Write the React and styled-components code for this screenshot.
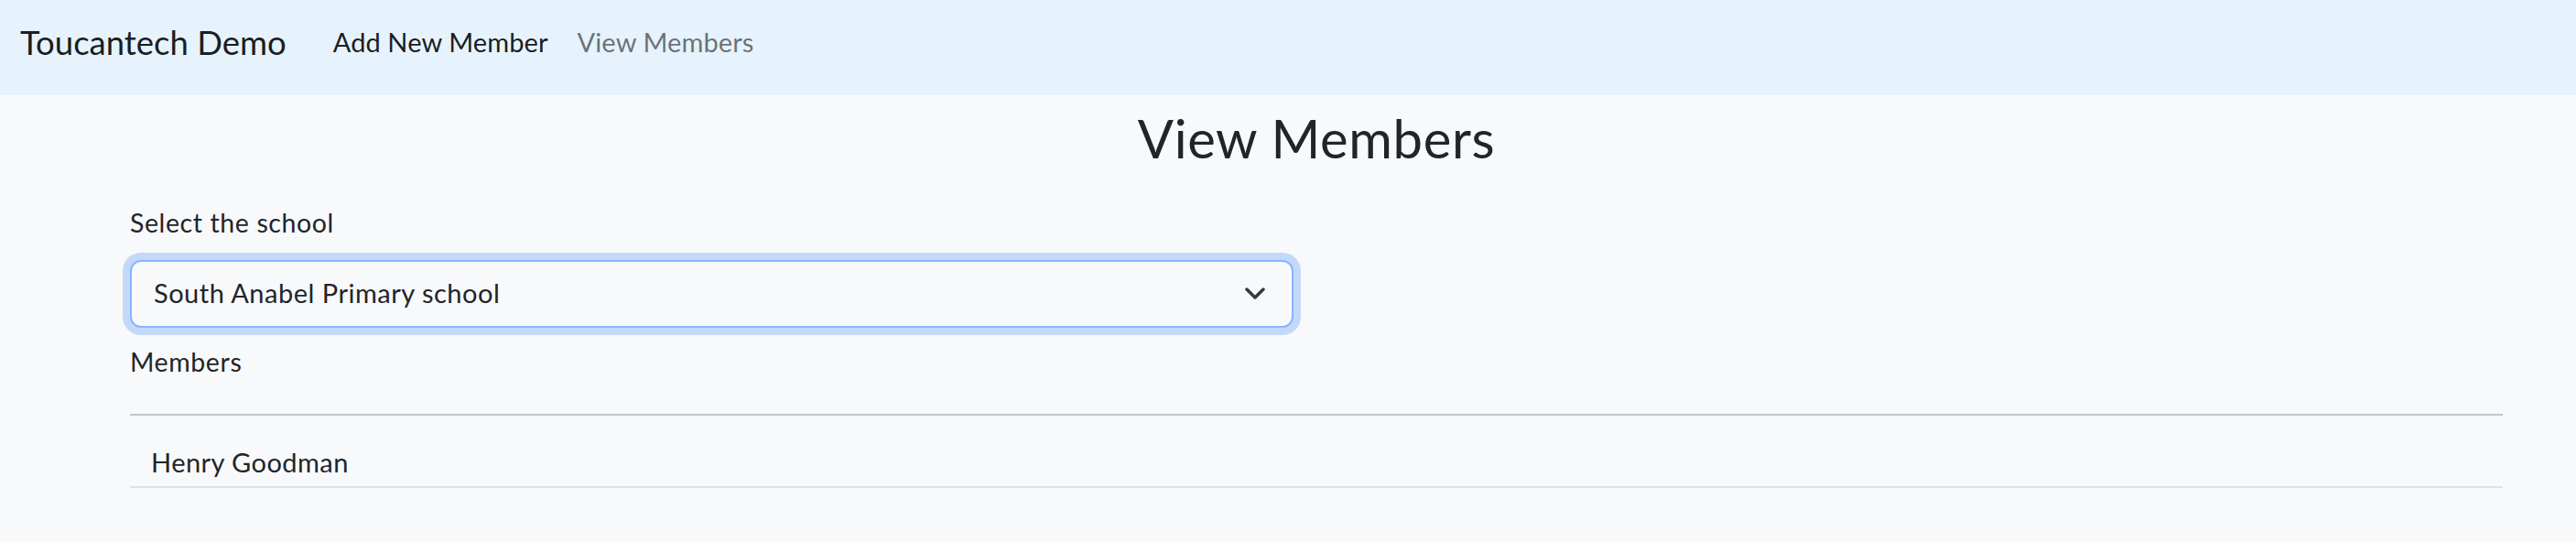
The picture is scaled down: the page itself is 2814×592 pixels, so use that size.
import React from "react";
import styled, { createGlobalStyle } from "styled-components";

const GlobalStyle = createGlobalStyle`
  html, body {
    margin: 0;
    padding: 0;
    background-color: #f8f9fb;
    font-family: Lato, "Noto Sans", sans-serif;
    color: #212529;
  }
`;

const App = () => {
  return (
    <>
      <GlobalStyle />
      <Navbar>
        <Brand>Toucantech Demo</Brand>
        <NavLinks>
          <NavItem>Add New Member</NavItem>
          <NavItem muted>View Members</NavItem>
        </NavLinks>
      </Navbar>
      <Main>
        <Title>View Members</Title>
        <Label>Select the school</Label>
        <SelectBox role="combobox" aria-expanded="false">
          <span>South Anabel Primary school</span>
          <Chevron viewBox="0 0 22 13" aria-hidden="true">
            <path d="M2 2l9 9 9-9" />
          </Chevron>
        </SelectBox>
        <Label spaced>Members</Label>
        <Divider />
        <MemberList>
          <MemberRow>Henry Goodman</MemberRow>
        </MemberList>
      </Main>
    </>
  );
};

export default App;

const Navbar = styled.nav`
  height: 104px;
  box-sizing: border-box;
  padding: 0 22px 11px;
  display: flex;
  align-items: center;
  background-color: #e6f2fc;
`;

const Brand = styled.div`
  font-size: 36.5px;
  line-height: 1.2;
  color: rgba(0, 0, 0, 0.9);
  margin-right: 35px;
`;

const NavLinks = styled.div`
  display: flex;
  align-items: center;
`;

const NavItem = styled.a`
  padding: 0 16px;
  font-size: 29px;
  line-height: 1.2;
  letter-spacing: 0.1px;
  color: ${(p) => (p.muted ? "rgba(0, 0, 0, 0.55)" : "rgba(0, 0, 0, 0.9)")};
  cursor: pointer;
`;

const Main = styled.main`
  padding: 12px 80px 0 142px;
`;

const Title = styled.h1`
  margin: 0 0 40px;
  text-align: center;
  font-size: 58px;
  font-weight: 400;
  line-height: 1.2;
  letter-spacing: 0.6px;
`;

const Label = styled.div`
  font-size: 28.5px;
  line-height: 34px;
  letter-spacing: 0.6px;
  margin-top: ${(p) => (p.spaced ? "20px" : "0")};
`;

const SelectBox = styled.div`
  margin-top: 24px;
  width: 1271px;
  height: 74px;
  box-sizing: border-box;
  padding: 0 29px 0 24px;
  display: flex;
  align-items: center;
  justify-content: space-between;
  border: 2px solid #86b7fe;
  border-radius: 12px;
  box-shadow: 0 0 0 8px #c4d8fa;
  background-color: #f8f9fb;
  font-size: 29px;
  line-height: 1.2;
  letter-spacing: 0.5px;
`;

const Chevron = styled.svg`
  width: 22px;
  height: 13px;
  fill: none;
  stroke: #343a40;
  stroke-width: 3.5;
  stroke-linecap: round;
  stroke-linejoin: round;
`;

const Divider = styled.hr`
  margin: 40px 0 0;
  border: 0;
  border-top: 2px solid #c4c5c7;
`;

const MemberList = styled.ul`
  list-style: none;
  margin: 0;
  padding: 0;
`;

const MemberRow = styled.li`
  padding: 34px 23px 9px;
  font-size: 29px;
  line-height: 1.2;
  letter-spacing: 0.45px;
  border-bottom: 2px solid #dee2e6;
`;
